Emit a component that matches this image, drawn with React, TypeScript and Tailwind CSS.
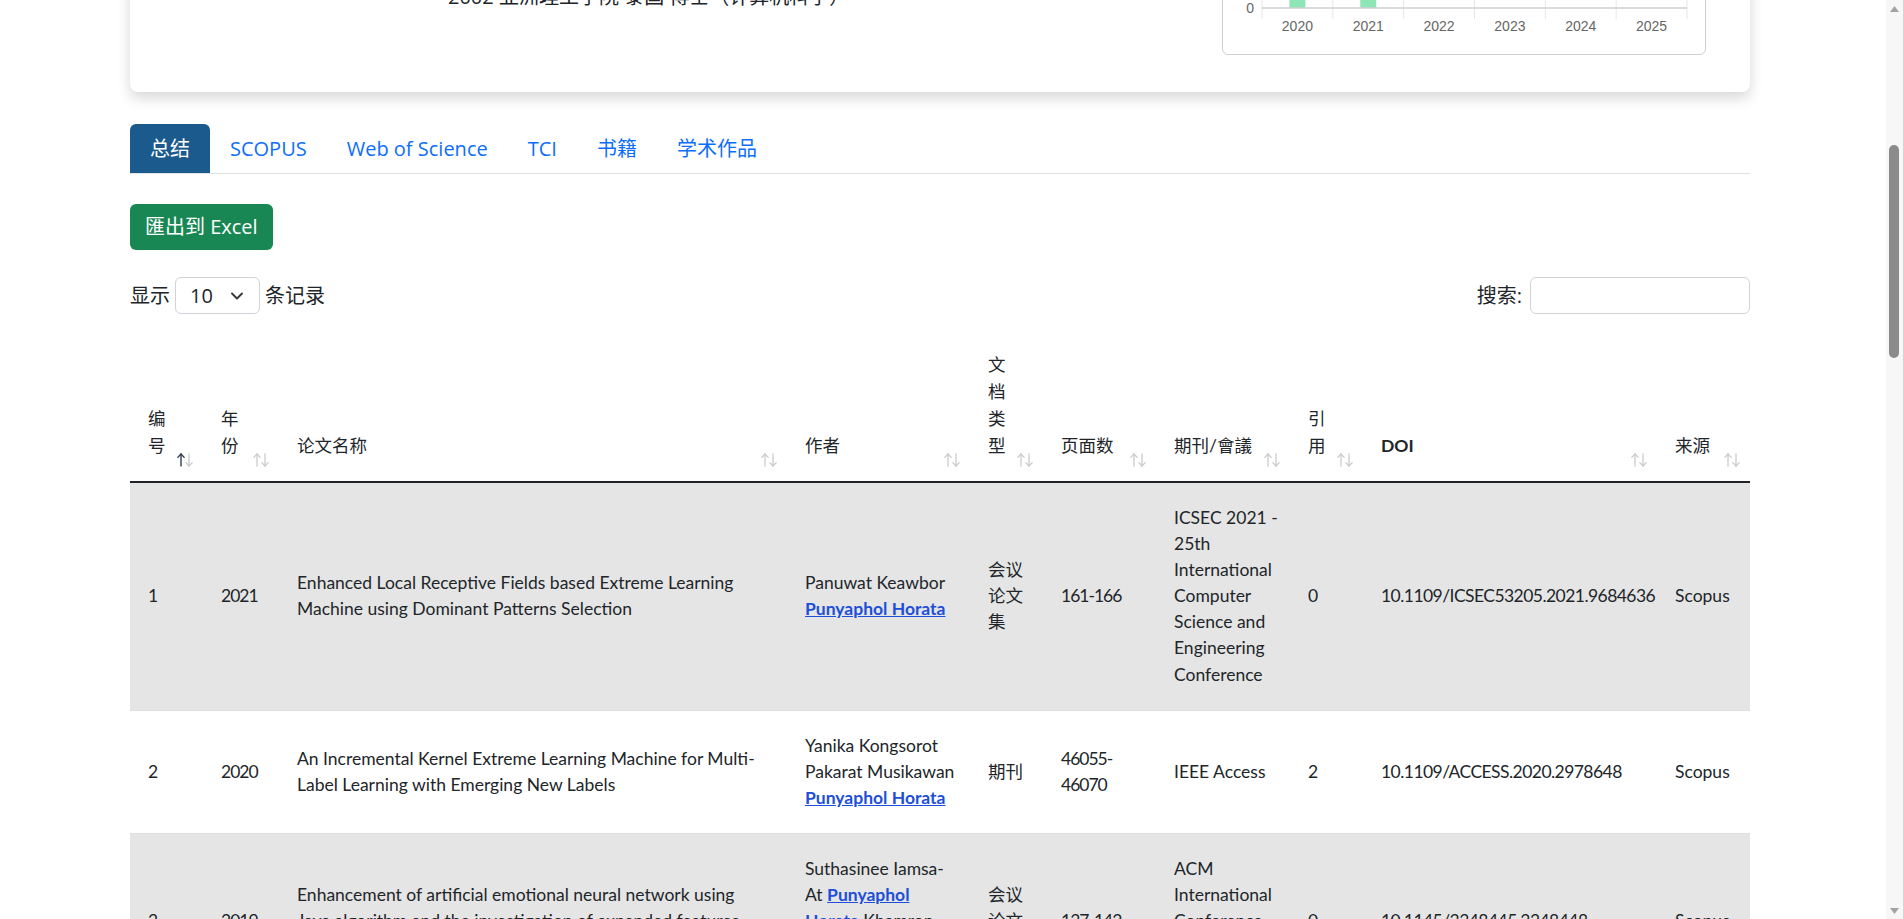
import React, { useLayoutEffect, useRef, useState } from 'react';
import { ChevronDown } from 'lucide-react';

type Author = { name: string; me?: boolean };

type Paper = {
  no: number;
  year: number;
  title: string;
  authors: Author[];
  type: string;
  pages: string;
  venue: string;
  cites: number;
  doi: string;
  source: string;
};

const papers: Paper[] = [
  {
    no: 1,
    year: 2021,
    title: 'Enhanced Local Receptive Fields based Extreme Learning Machine using Dominant Patterns Selection',
    authors: [{ name: 'Panuwat Keawbor' }, { name: 'Punyaphol Horata', me: true }],
    type: '会议论文集',
    pages: '161-166',
    venue: 'ICSEC 2021 - 25th International Computer Science and Engineering Conference',
    cites: 0,
    doi: '10.1109/ICSEC53205.2021.9684636',
    source: 'Scopus',
  },
  {
    no: 2,
    year: 2020,
    title: 'An Incremental Kernel Extreme Learning Machine for Multi-Label Learning with Emerging New Labels',
    authors: [{ name: 'Yanika Kongsorot' }, { name: 'Pakarat Musikawan' }, { name: 'Punyaphol Horata', me: true }],
    type: '期刊',
    pages: '46055-46070',
    venue: 'IEEE Access',
    cites: 2,
    doi: '10.1109/ACCESS.2020.2978648',
    source: 'Scopus',
  },
  {
    no: 3,
    year: 2019,
    title: 'Enhancement of artificial emotional neural network using Jaya algorithm and the investigation of expanded features for classification',
    authors: [
      { name: 'Suthasinee Iamsa-At' },
      { name: 'Punyaphol Horata', me: true },
      { name: 'Khamron Sunat' },
      { name: 'Chantana Chantrapornchai' },
    ],
    type: '会议论文集',
    pages: '137-142',
    venue: 'ACM International Conference Proceeding Series',
    cites: 0,
    doi: '10.1145/3348445.3348448',
    source: 'Scopus',
  },
  {
    no: 4,
    year: 2018,
    title: 'Multi-label classification using stacked hierarchical Dirichlet processes with reduced sampling complexity',
    authors: [{ name: 'Pakarat Musikawan' }, { name: 'Khamron Sunat' }, { name: 'Punyaphol Horata', me: true }],
    type: '期刊',
    pages: '1-25',
    venue: 'Knowledge and Information Systems',
    cites: 3,
    doi: '10.1007/s10115-018-1204-z',
    source: 'Scopus',
  },
  {
    no: 5,
    year: 2017,
    title: 'Kernel extreme learning machine based on fuzzy set theory for multi-label classification',
    authors: [{ name: 'Yanika Kongsorot' }, { name: 'Punyaphol Horata', me: true }, { name: 'Pakarat Musikawan' }],
    type: '期刊',
    pages: '979-989',
    venue: 'International Journal of Machine Learning and Cybernetics',
    cites: 9,
    doi: '10.1007/s13042-017-0776-3',
    source: 'Scopus',
  },
  {
    no: 6,
    year: 2016,
    title: 'Parallel extreme learning machine with improved robustness for regression',
    authors: [{ name: 'Pakarat Musikawan' }, { name: 'Punyaphol Horata', me: true }],
    type: '会议论文集',
    pages: '25-30',
    venue: 'ICSEC 2016 - 20th International Computer Science and Engineering Conference',
    cites: 1,
    doi: '10.1109/ICSEC.2016.7859925',
    source: 'Scopus',
  },
  {
    no: 7,
    year: 2014,
    title: 'Multi-label classification using kernel based extreme learning machine',
    authors: [{ name: 'Yanika Kongsorot' }, { name: 'Punyaphol Horata', me: true }],
    type: '会议论文集',
    pages: '99-104',
    venue: 'JCSSE 2014',
    cites: 12,
    doi: '10.1109/JCSSE.2014.6841849',
    source: 'Scopus',
  },
  {
    no: 8,
    year: 2013,
    title: 'Robust extreme learning machine',
    authors: [{ name: 'Punyaphol Horata', me: true }, { name: 'Sirapat Chiewchanwattana' }, { name: 'Khamron Sunat' }],
    type: '期刊',
    pages: '31-44',
    venue: 'Neurocomputing',
    cites: 158,
    doi: '10.1016/j.neucom.2011.12.045',
    source: 'Scopus',
  },
  {
    no: 9,
    year: 2012,
    title: 'Enhancement of online sequential extreme learning machine based on the householder block exact inverse QRD recursive least squares',
    authors: [{ name: 'Punyaphol Horata', me: true }, { name: 'Sirapat Chiewchanwattana' }, { name: 'Khamron Sunat' }],
    type: '期刊',
    pages: '20-30',
    venue: 'Neurocomputing',
    cites: 15,
    doi: '10.1016/j.neucom.2012.06.022',
    source: 'Scopus',
  },
  {
    no: 10,
    year: 2012,
    title: 'A comparative study of pseudo-inverse computing for the extreme learning machine classifier',
    authors: [{ name: 'Punyaphol Horata', me: true }, { name: 'Sirapat Chiewchanwattana' }, { name: 'Khamron Sunat' }],
    type: '会议论文集',
    pages: '40-45',
    venue: 'DSDE 2012',
    cites: 7,
    doi: '10.1109/DSDE.2012.63',
    source: 'Scopus',
  },
];

const tabs = ['总结', 'SCOPUS', 'Web of Science', 'TCI', '书籍', '学术作品'];

const years = [2020, 2021, 2022, 2023, 2024, 2025];
const citesByYear = [2, 1, 0, 0, 0, 0];

function SortIcon({ active }: { active?: boolean }) {
  return (
    <svg width="18" height="16" viewBox="0 0 18 16" fill="none" strokeWidth="1.3" strokeLinecap="round" className="absolute right-[9px] bottom-[13px]">
      <g stroke={active ? '#243447' : '#c9cbcd'}>
        <line x1="5" y1="2" x2="5" y2="14" />
        <polyline points="1.8,5.4 5,2 8.2,5.4" />
      </g>
      <g stroke="#c9cbcd">
        <line x1="13" y1="2" x2="13" y2="14" />
        <polyline points="9.8,10.6 13,14 16.2,10.6" />
      </g>
    </svg>
  );
}

function CitationChart() {
  const left = 39;
  const col = 70.83;
  const axisY = 282;
  const unit = 58;
  return (
    <svg width="482" height="328" className="block">
      <text x="241" y="30" textAnchor="middle" fontSize="17" fill="#333" fontFamily="Liberation Sans, Arial, sans-serif">
        引用次数
      </text>
      {[1, 2, 3].map((k) => (
        <g key={k}>
          <line x1={left} x2={left + col * 6} y1={axisY - k * unit} y2={axisY - k * unit} stroke="#e6e6e6" />
          <text x="31" y={axisY - k * unit + 5} textAnchor="end" fontSize="14" fill="#666" fontFamily="Liberation Sans, Arial, sans-serif">
            {k}
          </text>
        </g>
      ))}
      {Array.from({ length: 7 }).map((_, i) => (
        <line key={i} x1={left + col * i} x2={left + col * i} y1={axisY - 3 * unit} y2={axisY + 11} stroke="#e6e6e6" />
      ))}
      {citesByYear.map((v, i) =>
        v > 0 ? (
          <rect key={i} x={left + col * (i + 0.5) - 8} y={axisY - v * unit} width="16" height={v * unit} fill="#8ee6b6" />
        ) : null
      )}
      <line x1={left} x2={left + col * 6} y1={axisY} y2={axisY} stroke="#ccd0d4" strokeWidth="1.5" />
      <text x="31" y={axisY + 5} textAnchor="end" fontSize="14" fill="#666" fontFamily="Liberation Sans, Arial, sans-serif">
        0
      </text>
      {years.map((y, i) => (
        <text
          key={y}
          x={left + col * (i + 0.5)}
          y={axisY + 23}
          textAnchor="middle"
          fontSize="14"
          fill="#666"
          fontFamily="Liberation Sans, Arial, sans-serif"
        >
          {y}
        </text>
      ))}
    </svg>
  );
}

function Authors({ list }: { list: Author[] }) {
  return (
    <>
      {list.map((a, i) => (
        <React.Fragment key={i}>
          {i > 0 && ' '}
          {a.me ? (
            <a href="#" className="font-bold underline text-[#1d4fd8]">
              {a.name}
            </a>
          ) : (
            a.name
          )}
        </React.Fragment>
      ))}
    </>
  );
}

export default function App() {
  const scrollRef = useRef<HTMLDivElement>(null);
  const tabsRef = useRef<HTMLDivElement>(null);
  const [thumb, setThumb] = useState({ top: 0, height: 0 });

  const updateThumb = () => {
    const box = scrollRef.current;
    if (!box) return;
    const track = box.clientHeight - 34;
    const h = Math.max(24, (track * box.clientHeight) / box.scrollHeight);
    const max = box.scrollHeight - box.clientHeight;
    const t = max > 0 ? ((track - h) * box.scrollTop) / max : 0;
    setThumb({ top: t, height: h });
  };

  // open the page scrolled down to the publication tabs
  useLayoutEffect(() => {
    const box = scrollRef.current;
    const tabsEl = tabsRef.current;
    if (!box || !tabsEl) return;
    const offset = tabsEl.getBoundingClientRect().top - box.getBoundingClientRect().top + box.scrollTop;
    box.scrollTop = offset - 124;
    updateThumb();
  }, []);

  return (
    <div className="h-screen flex bg-white">
      <div
        ref={scrollRef}
        onScroll={updateThumb}
        className="flex-1 overflow-y-scroll [scrollbar-width:none] [&::-webkit-scrollbar]:hidden text-[#212529] font-['Open_Sans','Noto_Sans_CJK_SC',sans-serif] text-[20px]"
      >
        {/* Top nav */}
        <nav className="h-[72px] bg-[#1b5a8c] flex items-center px-[130px] text-white text-[22px]">
          KKU 学者档案
        </nav>

        <div className="ml-[130px] w-[1620px] pt-[96px] pb-[60px]">
          <h1 className="text-[30px] mb-[24px]">研究人员简介</h1>

          {/* Profile card */}
          <div className="bg-white rounded-[8px] shadow-[0_6px_14px_rgba(0,0,0,0.16)] px-[44px] pt-[37px] pb-[37px] flex items-end justify-between">
            <div className="flex items-end gap-[26px]">
              <div className="w-[220px] h-[260px] rounded-[6px] bg-[#e9ecef] mb-[60px]" />
              <div className="pb-[43px] leading-[30px]">
                <div className="text-[26px] font-semibold mb-[8px]">Punyaphol Horata</div>
                <div>计算机学院 · 孔敬大学</div>
                <div className="mb-[12px]">punhor1@kku.ac.th</div>
                <div className="font-semibold">教育背景</div>
                <ul className="list-disc pl-[28px]">
                  <li>1993 孔敬大学 泰国 学士（数学）</li>
                  <li>1997 朱拉隆功大学 泰国 硕士（计算机科学）</li>
                  <li>2002 亚洲理工学院 泰国 博士（计算机科学）</li>
                </ul>
              </div>
            </div>
            <div className="w-[484px] h-[330px] border border-[#cfcfcf] rounded-[6px] overflow-hidden">
              <CitationChart />
            </div>
          </div>

          {/* Tabs */}
          <div ref={tabsRef} className="mt-[32px] flex border-b border-[#dee2e6]">
            {tabs.map((t, i) => (
              <button
                key={t}
                className={
                  i === 0
                    ? 'h-[49px] px-[20px] rounded-t-[6px] bg-[#1b5a8c] text-white'
                    : 'h-[49px] px-[20px] text-[#0d6efd]'
                }
              >
                {t}
              </button>
            ))}
          </div>

          <button className="mt-[30px] h-[46px] px-[15px] rounded-[6px] bg-[#198754] text-white">匯出到 Excel</button>

          <div className="mt-[27px] flex items-center justify-between h-[37px]">
            <label className="flex items-center gap-[5px]">
              显示
              <span className="relative">
                <select className="appearance-none w-[85px] h-[37px] border border-[#ced4da] rounded-[6px] pl-[14px] bg-white">
                  <option>10</option>
                  <option>25</option>
                  <option>50</option>
                  <option>100</option>
                </select>
                <ChevronDown className="absolute right-[13px] top-[9px] w-[20px] h-[20px] pointer-events-none text-[#343a40]" strokeWidth={2.3} />
              </span>
              条记录
            </label>
            <label className="flex items-center gap-[8px]">
              搜索:
              <input className="w-[220px] h-[37px] border border-[#ced4da] rounded-[6px] px-[12px]" />
            </label>
          </div>

          {/* Publications table */}
          <table className="mt-[24px] w-[1620px] table-fixed border-collapse font-['Lato','Noto_Sans_CJK_SC',sans-serif] text-[17.5px]">
            <colgroup>
              <col className="w-[73px]" />
              <col className="w-[76px]" />
              <col className="w-[508px]" />
              <col className="w-[183px]" />
              <col className="w-[73px]" />
              <col className="w-[113px]" />
              <col className="w-[134px]" />
              <col className="w-[73px]" />
              <col className="w-[294px]" />
              <col className="w-[93px]" />
            </colgroup>
            <thead>
              <tr className="border-b-2 border-[#212529] text-left leading-[27px]">
                <th className="relative align-bottom font-normal pl-[18px] pr-[30px] pt-[13px] pb-[22px]">
                  编号
                  <SortIcon active />
                </th>
                <th className="relative align-bottom font-normal pl-[18px] pr-[30px] pt-[13px] pb-[22px]">
                  年份
                  <SortIcon />
                </th>
                <th className="relative align-bottom font-normal pl-[18px] pr-[30px] pt-[13px] pb-[22px]">
                  论文名称
                  <SortIcon />
                </th>
                <th className="relative align-bottom font-normal pl-[18px] pr-[30px] pt-[13px] pb-[22px]">
                  作者
                  <SortIcon />
                </th>
                <th className="relative align-bottom font-normal pl-[18px] pr-[30px] pt-[13px] pb-[22px]">
                  文档类型
                  <SortIcon />
                </th>
                <th className="relative align-bottom font-normal pl-[18px] pr-[30px] pt-[13px] pb-[22px]">
                  页面数
                  <SortIcon />
                </th>
                <th className="relative align-bottom font-normal pl-[18px] pr-[30px] pt-[13px] pb-[22px]">
                  期刊/會議
                  <SortIcon />
                </th>
                <th className="relative align-bottom font-normal pl-[18px] pr-[30px] pt-[13px] pb-[22px]">
                  引用
                  <SortIcon />
                </th>
                <th className="relative align-bottom font-bold pl-[18px] pr-[30px] pt-[13px] pb-[22px]">
                  DOI
                  <SortIcon />
                </th>
                <th className="relative align-bottom font-normal pl-[18px] pr-[30px] pt-[13px] pb-[22px]">
                  来源
                  <SortIcon />
                </th>
              </tr>
            </thead>
            <tbody className="leading-[26.1px]">
              {papers.map((p, i) => (
                <tr key={p.no} className={i % 2 === 0 ? 'bg-[#e5e5e5] border-b border-[#dcdfe3]' : 'bg-white border-b border-[#dcdfe3]'}>
                  <td className="align-middle py-[22px] pl-[18px] pr-[18px] tracking-[-1px]">{p.no}</td>
                  <td className="align-middle py-[22px] pl-[18px] pr-[18px] tracking-[-1px]">{p.year}</td>
                  <td className="align-middle py-[22px] pl-[18px] pr-[30px]">{p.title}</td>
                  <td className="align-middle py-[22px] pl-[18px] pr-[10px]">
                    <Authors list={p.authors} />
                  </td>
                  <td className="align-middle py-[22px] pl-[18px] pr-[18px]">{p.type}</td>
                  <td className="align-middle py-[22px] pl-[18px] pr-[18px] tracking-[-1px]">{p.pages}</td>
                  <td className="align-middle py-[22px] pl-[18px] pr-[10px]">{p.venue}</td>
                  <td className="align-middle py-[22px] pl-[18px] pr-[18px]">{p.cites}</td>
                  <td className="align-middle py-[22px] pl-[18px] pr-[10px] tracking-[-0.55px]">{p.doi}</td>
                  <td className="align-middle py-[22px] pl-[18px] pr-[18px]">{p.source}</td>
                </tr>
              ))}
            </tbody>
          </table>

          <div className="mt-[24px] flex items-center justify-between">
            <div>显示第 1 至 10 项结果，共 63 项</div>
            <div className="flex border border-[#dee2e6] rounded-[6px] overflow-hidden text-[#0d6efd]">
              <span className="px-[15px] py-[6px] text-[#6c757d]">上页</span>
              <span className="px-[15px] py-[6px] bg-[#0d6efd] text-white">1</span>
              <span className="px-[15px] py-[6px] border-l border-[#dee2e6]">2</span>
              <span className="px-[15px] py-[6px] border-l border-[#dee2e6]">3</span>
              <span className="px-[15px] py-[6px] border-l border-[#dee2e6]">下页</span>
            </div>
          </div>
        </div>

        <footer className="bg-[#1b5a8c] text-white py-[60px] px-[130px] text-[17px] min-h-[1000px]">
          © 孔敬大学 计算机学院
        </footer>
      </div>

      {/* Page scrollbar */}
      <div className="w-[17px] shrink-0 flex flex-col bg-[#f7f7f7]">
        <div className="h-[17px] flex items-center justify-center">
          <svg width="9" height="6" viewBox="0 0 9 6">
            <polygon points="0,6 4.5,0 9,6" fill="#a3a3a3" />
          </svg>
        </div>
        <div className="flex-1 relative">
          <div
            className="absolute left-[3px] w-[10px] rounded-full bg-[#8b8b8b]"
            style={{ top: thumb.top, height: thumb.height }}
          />
        </div>
        <div className="h-[17px] flex items-center justify-center">
          <svg width="9" height="6" viewBox="0 0 9 6">
            <polygon points="0,0 9,0 4.5,6" fill="#a3a3a3" />
          </svg>
        </div>
      </div>
    </div>
  );
}
